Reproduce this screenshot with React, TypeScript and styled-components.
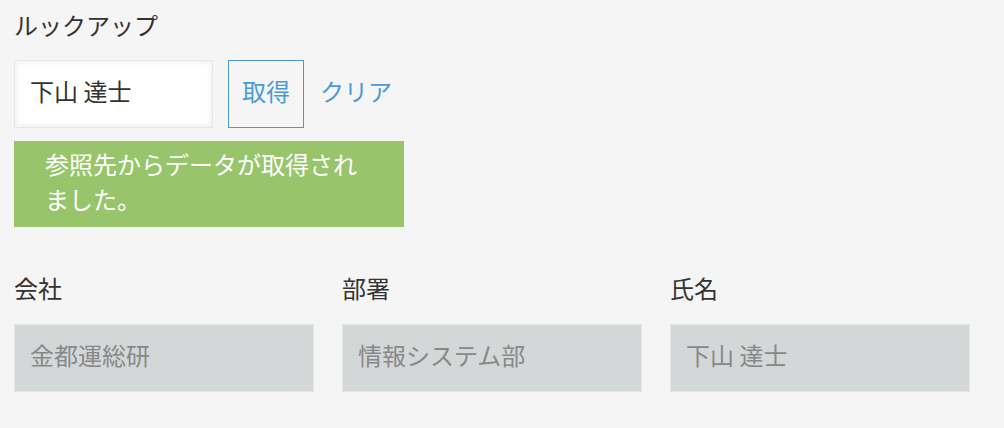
import React from "react";
import styled, { createGlobalStyle } from "styled-components";

const GlobalStyle = createGlobalStyle`
  body {
    margin: 0;
    background: #f5f5f5;
    font-family: "Noto Sans CJK JP", "Noto Sans", sans-serif;
    color: #333;
  }
`;

const Page = styled.div`
  padding: 9px 14px 0;
`;

const Title = styled.div`
  font-size: 24px;
  line-height: 32px;
`;

const LookupRow = styled.div`
  display: flex;
  align-items: center;
  margin-top: 19px;
  height: 68px;
`;

const LookupInput = styled.input`
  box-sizing: border-box;
  width: 199px;
  height: 68px;
  padding: 0 15px 8px;
  border: 1px solid #e3e7e8;
  background: #fff;
  box-shadow: 2px 2px 5px #f2f2f2 inset, -2px -2px 5px #f2f2f2 inset;
  font-family: inherit;
  font-size: 24px;
  color: #333;
  outline: none;
`;

const FetchButton = styled.button`
  box-sizing: border-box;
  height: 68px;
  margin-left: 15px;
  padding: 0 13px 8px;
  border: 1px solid #4b9ad8;
  background: transparent;
  font-family: inherit;
  font-size: 24px;
  color: #4b9ad8;
  cursor: pointer;
`;

const ClearLink = styled.a`
  margin: 0 0 8px 16px;
  font-size: 24px;
  color: #4b9ad8;
  cursor: pointer;
`;

const Message = styled.div`
  box-sizing: border-box;
  width: 390px;
  margin-top: 13px;
  padding: 5px 38px 11px 31px;
  background: #98c56b;
  color: #fff;
  font-size: 24px;
  line-height: 35px;
`;

const Fields = styled.div`
  display: flex;
  gap: 28px;
  margin-top: 45px;
`;

const Field = styled.div`
  display: flex;
  flex-direction: column;
  gap: 20px;
`;

const Label = styled.div`
  font-size: 24px;
  line-height: 32px;
`;

const ReadOnlyBox = styled.div`
  box-sizing: border-box;
  display: flex;
  align-items: center;
  width: 300px;
  height: 68px;
  padding: 0 15px 7px;
  border: 1px solid #e3e7e8;
  background: #d4d7d8;
  color: #888;
  font-size: 24px;
`;

const fields = [
  { label: "会社", value: "金都運総研" },
  { label: "部署", value: "情報システム部" },
  { label: "氏名", value: "下山 達士" },
];

export default function App() {
  return (
    <>
      <GlobalStyle />
      <Page>
        <Title>ルックアップ</Title>
        <LookupRow>
          <LookupInput defaultValue="下山 達士" />
          <FetchButton>取得</FetchButton>
          <ClearLink>クリア</ClearLink>
        </LookupRow>
        <Message>参照先からデータが取得されました。</Message>
        <Fields>
          {fields.map((f) => (
            <Field key={f.label}>
              <Label>{f.label}</Label>
              <ReadOnlyBox>{f.value}</ReadOnlyBox>
            </Field>
          ))}
        </Fields>
      </Page>
    </>
  );
}
